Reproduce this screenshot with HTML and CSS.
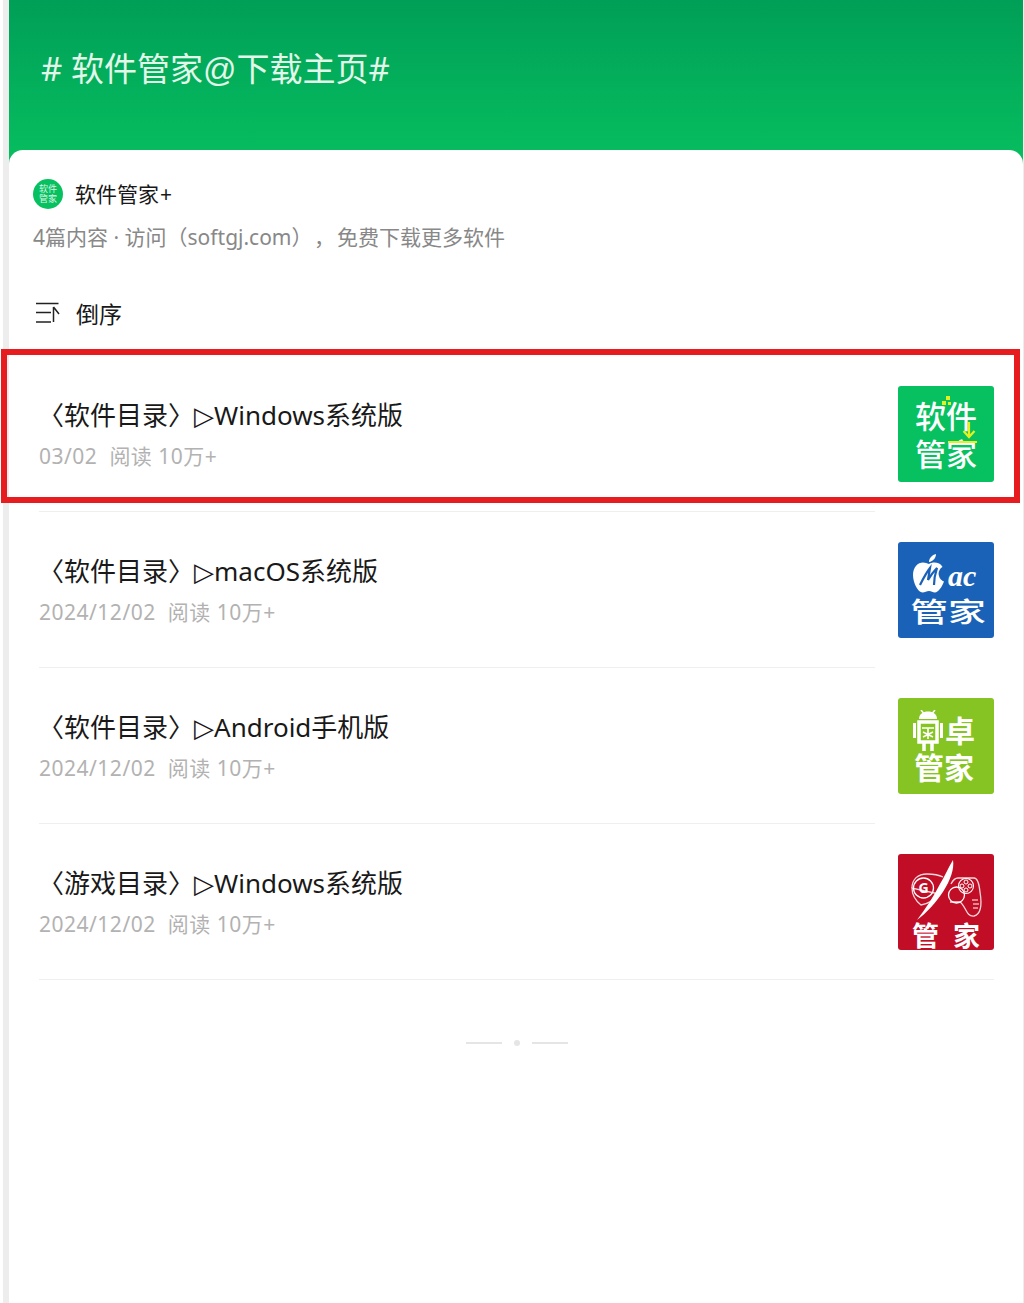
FILE: index.html
```html
<!DOCTYPE html>
<html lang="zh-CN">
  <head>
    <meta charset="UTF-8" />
    <title>软件管家</title>
    <link rel="stylesheet" href="styles.css">
  </head>
  <body>
    <div class="page">
      <div class="banner"># 软件管家<span class="at">@</span>下载主页#</div>
      <div class="card">
        <div class="author">
          <div class="avatar">软件管家</div>
          <span class="author-name">软件管家<small>+</small></span>
        </div>
        <p class="desc">4篇内容 · 访问（softgj.com）<span class="comma">，</span>免费下载更多软件</p>
        <div class="sort">
          <svg class="sort-icon" width="24" height="24" viewBox="0 0 24 24">
            <path d="M0 2.500H22.500M0 11.500H15M0 21H15" stroke="#222" stroke-width="1.700" fill="none" />
            <path d="M17.500 21V6M17.500 6L23 13" stroke="#222" stroke-width="1.500" fill="none" />
          </svg>
          <span>倒序</span>
        </div>
        <ul class="list">
          <li class="item">
            <div class="text">
              <div class="title">〈软件目录〉<span class="mark">▷</span>Windows系统版</div>
              <div class="meta"><span>03/02</span><span>阅读 10万+</span></div>
            </div>
            <div class="thumb thumb-soft">
              <svg class="soft-marks" width="96" height="96" viewBox="0 0 96 96">
                <rect x="48" y="10" width="4" height="4" fill="#e6f01e" />
                <rect x="44" y="15" width="4" height="4" fill="#e6f01e" />
                <rect x="50" y="16" width="3" height="3" fill="#e6f01e" />
                <path d="M71 36V50M65.500 45L71 51L76.500 45" stroke="#e6f01e" stroke-width="2.200" fill="none" />
                <rect x="50" y="55" width="29" height="2" fill="#e6f01e" />
              </svg>
              <span class="thumb-line">软件</span>
              <span class="thumb-line">管家</span>
            </div>
          </li>
          <li class="item">
            <div class="text">
              <div class="title">〈软件目录〉<span class="mark">▷</span>macOS系统版</div>
              <div class="meta"><span>2024/12/02</span><span>阅读 10万+</span></div>
            </div>
            <div class="thumb thumb-mac">
              <div class="mac-top">
                <svg width="34" height="40" viewBox="0 0 34 40">
                  <path d="M17 10C20 8 24 8 27 9.500C29 10.500 30 12 30.500 13C27 15 26 19 27 22C27.500 25 30 26.500 32 27.500C30 33 26 38.500 23 38.500C20.500 38.500 19.500 37 17 37C14.500 37 13 38.500 10.500 38.500C6 38.500 1 29 1 21C1 13 6 8.500 11 8.500C13.500 8.500 15 9.500 17 10Z" fill="#fff" />
                  <path d="M17 8C17 4 20 1 24 0C24 4 21 7.500 17 8Z" fill="#fff" />
                  <path d="M8 31C11 25 14 19 18 14L16 26C19 21 21 18 25 14C23 20 22 25 22 31" stroke="#1a62b8" stroke-width="2.200" fill="none" />
                </svg>
                <span class="mac-word">ac</span>
              </div>
              <span class="mac-name">管家</span>
            </div>
          </li>
          <li class="item">
            <div class="text">
              <div class="title">〈软件目录〉<span class="mark">▷</span>Android手机版</div>
              <div class="meta"><span>2024/12/02</span><span>阅读 10万+</span></div>
            </div>
            <div class="thumb thumb-android">
              <div class="android-top">
                <svg width="30" height="41" viewBox="0 0 30 41">
                  <path d="M6 9C6 4 10 1.500 15 1.500C20 1.500 24 4 24 9Z" fill="#fff" />
                  <path d="M8 0L10.500 3M22 0L19.500 3" stroke="#fff" stroke-width="1.500" />
                  <rect x="6" y="12" width="18" height="20" fill="none" stroke="#fff" stroke-width="3.500" />
                  <path d="M1.500 13V28M28.500 13V28" stroke="#fff" stroke-width="3" />
                  <path d="M11 32V41M19 32V41" stroke="#fff" stroke-width="3.500" />
                  <path d="M9 18H21M15 18V29M10 22L20 27M20 22L10 27" stroke="#fff" stroke-width="1.600" />
                </svg>
                <span>卓</span>
              </div>
              <span class="thumb-line">管家</span>
            </div>
          </li>
          <li class="item">
            <div class="text">
              <div class="title">〈游戏目录〉<span class="mark">▷</span>Windows系统版</div>
              <div class="meta"><span>2024/12/02</span><span>阅读 10万+</span></div>
            </div>
            <div class="thumb thumb-game">
              <svg class="game-art" width="96" height="68" viewBox="0 0 96 68">
                <path d="M14 34C14 25 20 20 29 20C35 20 41 21 45 23M41 40C36 46 30 50 23 51C18 47 14 42 14 34Z" stroke="#f4d8dc" stroke-width="1.300" fill="none" />
                <circle cx="25.500" cy="34" r="10" stroke="#fff" stroke-width="1.300" fill="none" />
                <text x="25.500" y="39" class="game-g">G</text>
                <path d="M19 66C38 52 58 24 55 6C50 14 47 22 42 30C36 42 28 54 19 66Z" fill="#fff" />
                <path d="M60 24H76C79 24 81 28 82 38C84 50 84 60 76 62C68 63 68 52 62 48H52" stroke="#f4d8dc" stroke-width="1.300" fill="none" />
                <path d="M60 24C56 24 54 28 53 30" stroke="#f4d8dc" stroke-width="1.300" fill="none" />
                <circle cx="68" cy="32" r="7.500" stroke="#fff" stroke-width="1.100" fill="none" />
                <circle cx="68" cy="28" r="2" stroke="#fff" fill="none" />
                <circle cx="68" cy="36" r="2" stroke="#fff" fill="none" />
                <circle cx="64" cy="32" r="2" stroke="#fff" fill="none" />
                <circle cx="72" cy="32" r="2" stroke="#fff" fill="none" />
                <circle cx="58.500" cy="41" r="8" stroke="#fff" stroke-width="1.300" fill="none" />
                <path d="M74 46H80M75 50H81M75 54H80" stroke="#fff" stroke-width="1" />
              </svg>
              <span class="game-name"><span>管</span><span>家</span></span>
            </div>
          </li>
        </ul>
        <div class="end">
          <span class="end-line"></span>
          <span class="end-dot"></span>
          <span class="end-line"></span>
        </div>
      </div>
    </div>
    <div class="highlight"></div>
  </body>
</html>
```

FILE: styles.css
```css
* {
  margin: 0;
  padding: 0;
  box-sizing: border-box;
}
body {
  background-color: #fff;
  font-family: "Noto Sans", "Noto Sans CJK SC", sans-serif;
}
li {
  list-style: none;
}
.page {
  margin-left: 3px;
  padding: 0 1px 0 6px;
  height: 1303px;
  background-color: #ededed;
}

/* top banner */
.banner {
  height: 176px;
  padding: 46px 0 0 32px;
  background: linear-gradient(180deg, #009f57 0%, #07c160 100%);
  color: #e3f6ea;
  font-size: 33px;
  line-height: 46px;
}
.at {
  font-family: "Liberation Sans", sans-serif;
}
.card {
  margin-top: -26px;
  height: 1153px;
  padding: 28px 0 0 24px;
  background-color: #fff;
  border-radius: 14px 14px 0 0;
}
.author {
  display: flex;
  align-items: center;
  column-gap: 12px;
  height: 32px;
}
.avatar {
  width: 30px;
  height: 30px;
  padding: 5px 6px 0;
  border-radius: 50%;
  background-color: #07c160;
  color: #d9f5e3;
  font-size: 9px;
  line-height: 10px;
  text-align: center;
}
.author-name {
  color: #191919;
  font-size: 21px;
  line-height: 32px;
}
.author-name small {
  margin-left: 1px;
  font-size: 21px;
}
.desc {
  margin-top: 11px;
  color: #888;
  font-size: 21px;
  line-height: 32px;
}
.comma {
  margin: 0 2px 0 12px;
}
.sort {
  display: flex;
  align-items: center;
  margin-top: 44px;
  padding-left: 3px;
  height: 32px;
  color: #191919;
  font-size: 23px;
}
.sort-icon {
  margin-right: 16px;
}

/* article list */
.list {
  margin-top: 27px;
  padding-left: 6px;
}
.item {
  position: relative;
  display: flex;
  justify-content: space-between;
  height: 156px;
  padding: 30px 29px 0 0;
}
.item::after {
  content: "";
  position: absolute;
  left: 0;
  right: 148px;
  bottom: 0;
  height: 1px;
  background-color: #efefef;
}
.item:last-child::after {
  right: 29px;
}
.text {
  padding-top: 9px;
}
.title {
  margin-left: -1px;
  color: #191919;
  font-size: 26px;
  line-height: 40px;
}
.mark {
  font-family: "DejaVu Sans", sans-serif;
  font-size: 26px;
}
.meta {
  display: flex;
  column-gap: 12px;
  margin-top: 4px;
  color: #b2b2b2;
  font-size: 21px;
  letter-spacing: 0.5px;
  line-height: 32px;
}
.thumb {
  display: flex;
  flex-direction: column;
  position: relative;
  width: 96px;
  height: 96px;
  border-radius: 3px;
  color: #fff;
}
.thumb-line {
  font-size: 31px;
  font-weight: 500;
  line-height: 34px;
  text-align: center;
}
.thumb-soft {
  padding-top: 13px;
  background-color: #07c160;
}
.thumb-soft .thumb-line:last-of-type {
  margin-top: 4px;
}
.soft-marks {
  position: absolute;
  top: 0;
  left: 0;
}
.thumb-mac {
  padding: 11px 0 0 14px;
  background-color: #1a62b8;
}
.mac-top {
  display: flex;
  align-items: flex-end;
  column-gap: 2px;
  height: 41px;
}
.mac-word {
  font-family: "Liberation Serif", serif;
  font-size: 30px;
  font-style: italic;
  font-weight: 700;
  line-height: 36px;
}
.mac-name {
  margin: 3px 0 0 -10px;
  font-size: 27px;
  font-weight: 500;
  line-height: 30px;
  text-align: center;
  transform: scaleX(1.4);
}
.thumb-android {
  padding: 12px 0 0 15px;
  background-color: #86c424;
}
.android-top {
  display: flex;
  align-items: center;
  column-gap: 2px;
  height: 41px;
  font-size: 30px;
  font-weight: 700;
  line-height: 34px;
}
.thumb-android .thumb-line {
  width: 62px;
  font-size: 30px;
  font-weight: 700;
}
.thumb-game {
  background-color: #c20d26;
}
.game-g {
  fill: #fff;
  font-size: 14px;
  font-weight: 700;
  text-anchor: middle;
}
.game-name {
  display: flex;
  justify-content: space-between;
  padding: 0 14px;
  font-size: 27px;
  font-weight: 700;
  line-height: 28px;
}

/* end of list */
.end {
  display: flex;
  justify-content: center;
  align-items: center;
  column-gap: 12px;
  margin: 61px 0 0 -23px;
  height: 4px;
}
.end-line {
  width: 36px;
  height: 2px;
  background-color: #e5e5e5;
}
.end-dot {
  width: 6px;
  height: 6px;
  border-radius: 50%;
  background-color: #e5e5e5;
}

/* red box drawn over the first article */
.highlight {
  position: absolute;
  top: 349px;
  left: 1px;
  width: 1019px;
  height: 154px;
  border: 6px solid #e71c1f;
}
```
